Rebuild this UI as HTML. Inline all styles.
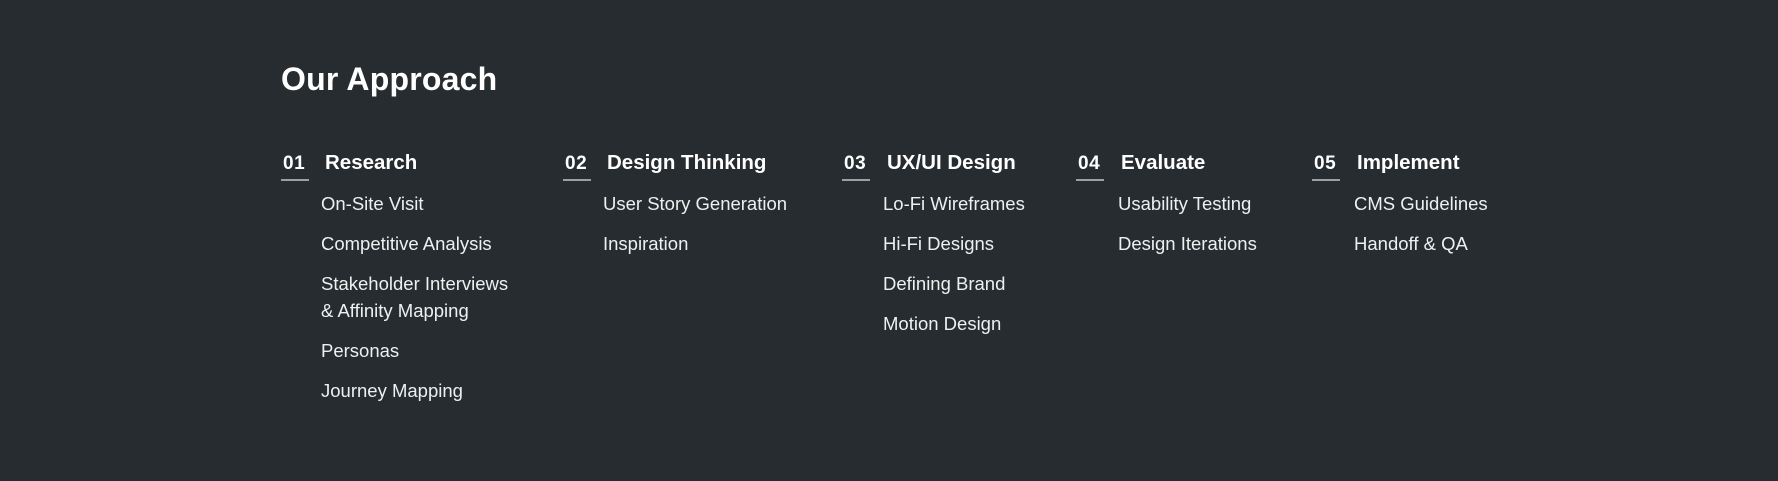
<!DOCTYPE html>
<html><head><meta charset="utf-8"><style>
body{margin:0;width:1778px;height:481px;background:#262c30;font-family:"Liberation Sans",sans-serif;color:#fff;position:relative;overflow:hidden}
h1{position:absolute;left:281px;top:61px;margin:0;font-size:32px;font-weight:bold;letter-spacing:0.2px}
.col{position:absolute;top:150px}
.num{position:absolute;left:0;top:2px;font-size:19px;font-weight:bold;line-height:24px;letter-spacing:0.5px}
.ul{position:absolute;left:-2px;top:29px;width:28px;height:2px;background:#9aa0a3}
.hd{position:absolute;top:1px;font-size:20.5px;font-weight:bold;line-height:24px;white-space:nowrap}
ul{list-style:none;margin:0;padding:0;position:absolute;top:40px;color:#eef0f0;font-size:18.5px;line-height:27px;white-space:nowrap}
li{margin-bottom:13px}
</style></head><body>
<h1>Our Approach</h1>
<div class="col" style="left:283px"><div class="num">01</div><div class="ul"></div><div class="hd" style="left:42px">Research</div>
<ul style="left:38px"><li>On-Site Visit</li><li>Competitive Analysis</li><li>Stakeholder Interviews<br>&amp; Affinity Mapping</li><li>Personas</li><li>Journey Mapping</li></ul></div>
<div class="col" style="left:565px"><div class="num">02</div><div class="ul"></div><div class="hd" style="left:42px">Design Thinking</div>
<ul style="left:38px"><li>User Story Generation</li><li>Inspiration</li></ul></div>
<div class="col" style="left:844px"><div class="num">03</div><div class="ul"></div><div class="hd" style="left:43px">UX/UI Design</div>
<ul style="left:39px"><li>Lo-Fi Wireframes</li><li>Hi-Fi Designs</li><li>Defining Brand</li><li>Motion Design</li></ul></div>
<div class="col" style="left:1078px"><div class="num">04</div><div class="ul"></div><div class="hd" style="left:43px">Evaluate</div>
<ul style="left:40px"><li>Usability Testing</li><li>Design Iterations</li></ul></div>
<div class="col" style="left:1314px"><div class="num">05</div><div class="ul"></div><div class="hd" style="left:43px">Implement</div>
<ul style="left:40px"><li>CMS Guidelines</li><li>Handoff &amp; QA</li></ul></div>
</body></html>
